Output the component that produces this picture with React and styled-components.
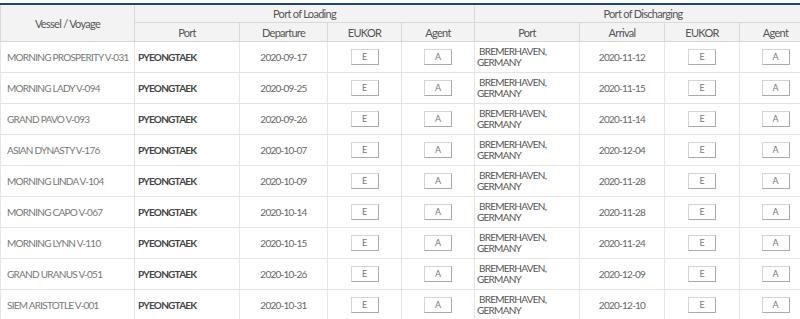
import React from "react";
import styled, { createGlobalStyle } from "styled-components";

const GlobalStyle = createGlobalStyle`
  body {
    margin: 0;
    background: #fff;
    font-family: Lato, "Open Sans", sans-serif;
  }
`;

const Wrapper = styled.div`
  width: 800px;
  height: 319px;
  overflow: hidden;
  padding-top: 3px;
  box-sizing: border-box;
`;

const Table = styled.table`
  width: 811px;
  table-layout: fixed;
  border-collapse: collapse;
  border-top: 2px solid #1d4677;
`;

const Th = styled.th`
  background: #f3f3f3;
  border: 1px solid #d9d9d9;
  border-top: none;
  color: #555;
  font-size: 11px;
  letter-spacing: -0.7px;
  font-weight: 400;
  text-align: center;
  height: ${(p) => p.$h || 18}px;
  padding: 0;
`;

const Td = styled.td`
  border: 1px solid #e4e4e4;
  border-top: none;
  height: 30px;
  padding: 0 0 0 ${(p) => p.$pl || 0}px;
  font-size: 10px;
  letter-spacing: -0.75px;
  color: ${(p) => p.$color || "#666"};
  font-weight: ${(p) => (p.$bold ? 700 : 400)};
  text-align: ${(p) => p.$align || "center"};
  line-height: 11px;
  white-space: nowrap;
`;

const Btn = styled.span`
  display: inline-block;
  width: 26px;
  height: 14px;
  line-height: 14px;
  border: 1px solid #d4d4d4;
  border-right-color: #aaa;
  border-bottom-color: #aaa;
  background: #fff;
  color: #777;
  font-size: 9px;
  letter-spacing: 0;
  text-align: center;
`;

const FirstLine = styled.span`
  padding-left: 2px;
`;

const rows = [
  ["MORNING PROSPERITY V-031", "2020-09-17", "2020-11-12"],
  ["MORNING LADY V-094", "2020-09-25", "2020-11-15"],
  ["GRAND PAVO V-093", "2020-09-26", "2020-11-14"],
  ["ASIAN DYNASTY V-176", "2020-10-07", "2020-12-04"],
  ["MORNING LINDA V-104", "2020-10-09", "2020-11-28"],
  ["MORNING CAPO V-067", "2020-10-14", "2020-11-28"],
  ["MORNING LYNN V-110", "2020-10-15", "2020-11-24"],
  ["GRAND URANUS V-051", "2020-10-26", "2020-12-09"],
  ["SIEM ARISTOTLE V-001", "2020-10-31", "2020-12-10"],
];

const widths = [134, 105, 88, 74, 73, 105, 85, 75, 72];

export default function App() {
  return (
    <Wrapper>
      <GlobalStyle />
      <Table>
        <colgroup>
          {widths.map((w, i) => (
            <col key={i} style={{ width: w }} />
          ))}
        </colgroup>
        <thead>
          <tr>
            <Th rowSpan={2}>Vessel / Voyage</Th>
            <Th colSpan={4} $h={17}>Port of Loading</Th>
            <Th colSpan={4} $h={17}>Port of Discharging</Th>
          </tr>
          <tr>
            <Th>Port</Th>
            <Th>Departure</Th>
            <Th>EUKOR</Th>
            <Th>Agent</Th>
            <Th>Port</Th>
            <Th>Arrival</Th>
            <Th>EUKOR</Th>
            <Th>Agent</Th>
          </tr>
        </thead>
        <tbody>
          {rows.map(([vessel, dep, arr]) => (
            <tr key={vessel}>
              <Td $align="left" $pl={6} $color="#777">{vessel}</Td>
              <Td $align="left" $pl={3} $bold $color="#444">PYEONGTAEK</Td>
              <Td>{dep}</Td>
              <Td><Btn>E</Btn></Td>
              <Td><Btn>A</Btn></Td>
              <Td $align="left" $pl={2} $color="#555">
                <FirstLine>BREMERHAVEN,</FirstLine>
                <br />
                GERMANY
              </Td>
              <Td>{arr}</Td>
              <Td><Btn>E</Btn></Td>
              <Td><Btn>A</Btn></Td>
            </tr>
          ))}
        </tbody>
      </Table>
    </Wrapper>
  );
}
